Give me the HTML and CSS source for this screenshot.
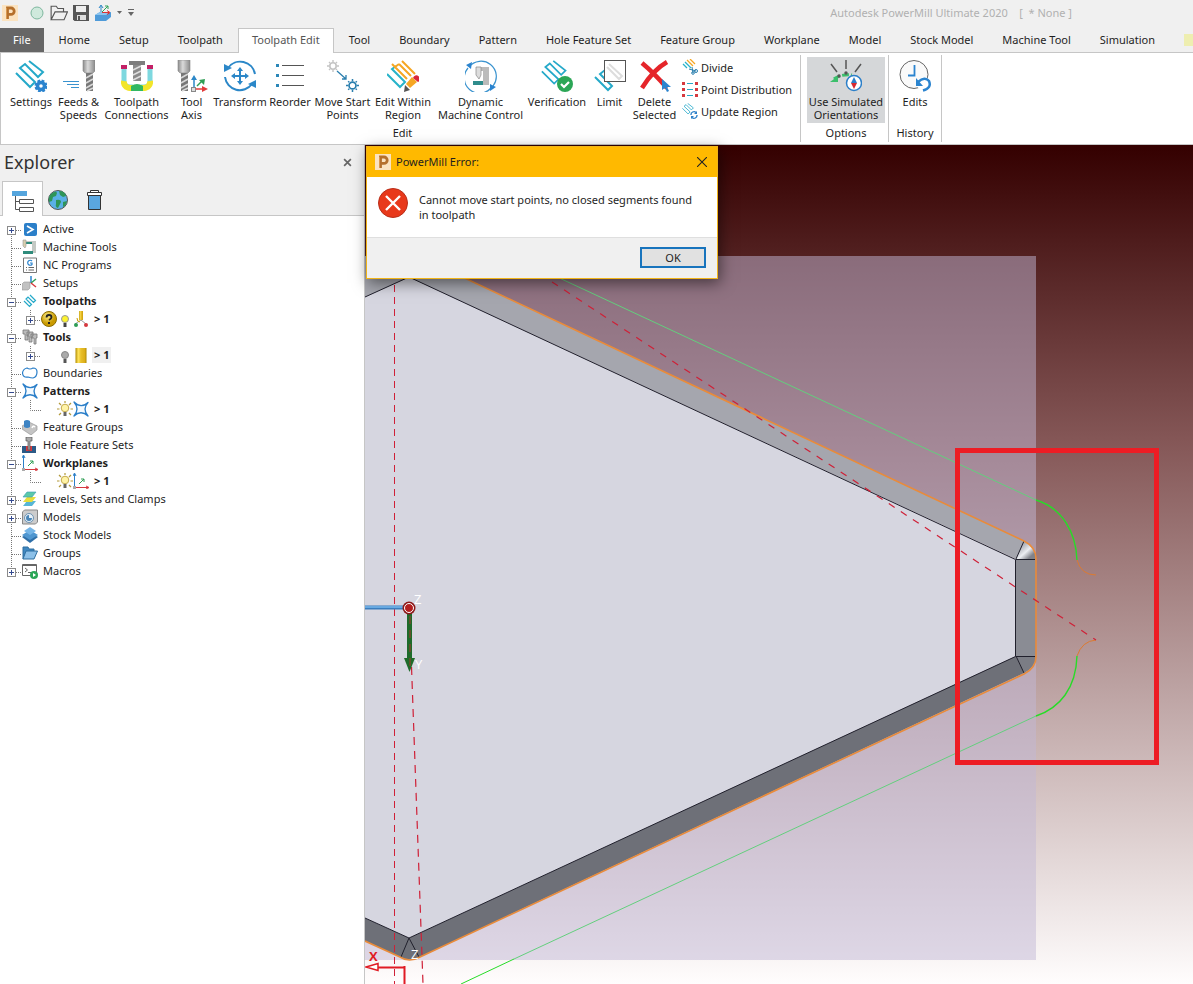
FILE: index.html
```html
<!DOCTYPE html>
<html lang="en">
<head>
<meta charset="utf-8">
<title>Autodesk PowerMill Ultimate 2020</title>
<link rel="stylesheet" href="styles.css">
</head>
<body>
<svg class="defs" aria-hidden="true">
  <defs>
    <linearGradient id="steel"><stop offset="0" stop-color="#8d8d8d"/><stop offset=".4" stop-color="#dadada"/><stop offset="1" stop-color="#8a8a8a"/></linearGradient>
    <linearGradient id="gold"><stop offset="0" stop-color="#b08a00"/><stop offset=".25" stop-color="#ffe45a"/><stop offset=".5" stop-color="#e8bf2a"/><stop offset=".85" stop-color="#dcae18"/><stop offset="1" stop-color="#a88400"/></linearGradient>
    <radialGradient id="orb" cx=".4" cy=".3"><stop offset="0" stop-color="#fff08a"/><stop offset="1" stop-color="#c99a00"/></radialGradient>
    <symbol id="p" viewBox="0 0 16 16"><rect width="16" height="16" fill="#fbe3c0"/><path d="M5.500 14V3H9a3.200 3.200 0 0 1 0 6.400H6" fill="none" stroke="#b5702c" stroke-width="2.800"/><path d="M4.500 14V3" stroke="#d9984f"/></symbol>
    <symbol id="cutter" viewBox="0 0 14 32"><path d="M1 0h12v11l-2 2H3l-2-2z" fill="url(#steel)" stroke="#888" stroke-width=".6"/><path d="M4 13h7v18H4z" fill="#777"/><path d="M4 18l7-4M4 23l7-4M4 28l7-4M5 31l6-3" stroke="#d8d8d8" stroke-width="1.600"/></symbol>
    <symbol id="hatch" viewBox="0 0 32 32"><path d="M1 13L15 27L20 22L5 8L10 4L23 17L28 12L14 1" fill="none" stroke="#25a9c9" stroke-width="2"/></symbol>
    <symbol id="star" viewBox="0 0 16 16"><path d="M1 1Q8 8 15 1.500Q9 8 15 15Q8 8.500 1 15Q7 8 1 1Z" fill="#f4faff" stroke="#2b7fc9" stroke-width="1.300" stroke-linejoin="round"/></symbol>
    <symbol id="planes" viewBox="0 0 16 16"><path d="M1.500 14V1M0 3l1.500-3L3 3" stroke="#2b7fc9" fill="none"/><path d="M2 14.500h13M13 13l3 1.500-3 1.500" stroke="#d6393f" fill="none"/><path d="M6 11l5-5M8 6h3v3" stroke="#2f9e55" fill="none"/><rect y="13" width="3" height="3" fill="#aaa"/></symbol>
    <symbol id="lit" viewBox="0 0 16 16"><path d="M8 0v2M2 2l2 2M14 2l-2 2M0 8h2.500M13.500 8H16M2 14l2-2M14 14l-2-2" stroke="#b39a3a" stroke-width="1.200"/><circle cx="8" cy="7" r="3.800" fill="#fff3a6" stroke="#c4a94c"/><path d="M6.500 11h3v4h-3z" fill="#666"/></symbol>
    <symbol id="sun-gear" viewBox="0 0 12 12"><circle cx="6" cy="6" r="3.200" fill="none" stroke="currentColor" stroke-width="1.600"/><path d="M6 0v2M6 10v2M0 6h2M10 6h2M2 2l1 1M10 2L9 3M2 10l1-1M10 10L9 9" stroke="currentColor" stroke-width="1.400"/></symbol>
    <symbol id="t-plus" viewBox="0 0 22 18"><path d="M11.500 0v18M16 10.500h6" class="dots"/><rect x="7.500" y="6.500" width="8" height="8" fill="#fff" stroke="#8b8b8b"/><path d="M9 10.500h5M11.500 8v5" stroke="#33498f"/></symbol>
    <symbol id="t-minus" viewBox="0 0 22 18"><path d="M11.500 0v18M16 10.500h6" class="dots"/><rect x="7.500" y="6.500" width="8" height="8" fill="#fff" stroke="#8b8b8b"/><path d="M9 10.500h5" stroke="#33498f"/></symbol>
    <symbol id="t-first" viewBox="0 0 22 18"><path d="M11.500 14v4M16 10.500h6" class="dots"/><rect x="7.500" y="6.500" width="8" height="8" fill="#fff" stroke="#8b8b8b"/><path d="M9 10.500h5M11.500 8v5" stroke="#33498f"/></symbol>
    <symbol id="t-last" viewBox="0 0 22 18"><path d="M11.500 0v7M16 10.500h6" class="dots"/><rect x="7.500" y="6.500" width="8" height="8" fill="#fff" stroke="#8b8b8b"/><path d="M9 10.500h5M11.500 8v5" stroke="#33498f"/></symbol>
    <symbol id="t-leaf" viewBox="0 0 22 18"><path d="M11.500 0v18M12 10.500h10" class="dots"/></symbol>
    <symbol id="t-line" viewBox="0 0 22 18"><path d="M11.500 0v18" class="dots"/></symbol>
    <symbol id="c-plus" viewBox="0 0 19 18"><path d="M8.500 0v6M13 10.500h6" class="dots"/><rect x="4.500" y="6.500" width="8" height="8" fill="#fff" stroke="#8b8b8b"/><path d="M6 10.500h5M8.500 8v5" stroke="#33498f"/></symbol>
    <symbol id="c-leaf" viewBox="0 0 19 18"><path d="M8.500 0v10.500H19" class="dots"/></symbol>
  </defs>
</svg>

<div class="app">
  <header class="titlebar">
    <svg class="i16"><use href="#p"/></svg>
    <div class="quick">
      <button aria-label="Status"><svg class="i16" viewBox="0 0 16 16"><circle cx="8" cy="8" r="6" fill="#cfe9dc" stroke="#7eb79e"/></svg></button>
      <button aria-label="Open"><svg class="i18" viewBox="0 0 16 16"><path d="M1 14V2h4.500l1.500 2h5v3M1 14h11.500L15.500 7H4.500z" fill="none" stroke="#555"/></svg></button>
      <button aria-label="Save"><svg class="i16" viewBox="0 0 16 16"><path d="M0 0h16v16H1.500L0 14.500z" fill="#555"/><path d="M3 1h10v6H3z" fill="#eee"/><path d="M4 10h9v5H4z" fill="#ddd"/><path d="M5 11h2v4H5z" fill="#555"/></svg></button>
      <button aria-label="Export"><svg class="i18" viewBox="0 0 18 18"><path d="M1 11l5-3h11v5l-5 4H1z" fill="#4f9bd9"/><path d="M1 11l5-3h11l-5 3z" fill="#8cc4ee"/><path d="M7 8V2M5 4l2-3 2 3" stroke="#2b87c8" fill="none"/><path d="M8 8l6-6M11 2h3v3" stroke="#30a35c" fill="none"/><path d="M8 8.500h7M13 6.500l3 2-3 2" stroke="#d33" fill="none"/></svg></button>
      <button aria-label="Export options"><svg class="i6" viewBox="0 0 6 6"><path d="M0 1h5L2.500 4z" fill="#666"/></svg></button>
      <button aria-label="Customize"><svg class="i6" viewBox="0 0 6 8"><path d="M0 0h6v1H0zM0 3h6L3 7z" fill="#666"/></svg></button>
    </div>
    <h1>Autodesk PowerMill Ultimate 2020 &nbsp;&nbsp; [ &nbsp;* None ]</h1>
  </header>

  <nav class="tabs">
    <button class="file">File</button><button>Home</button><button>Setup</button><button>Toolpath</button><button class="current">Toolpath Edit</button><button>Tool</button><button>Boundary</button><button>Pattern</button><button>Hole Feature Set</button><button>Feature Group</button><button>Workplane</button><button>Model</button><button>Stock Model</button><button>Machine Tool</button><button>Simulation</button><button aria-label="More"><svg class="i16" viewBox="0 0 16 16"><rect y="2" width="16" height="12" fill="#eeeeb0"/></svg></button>
  </nav>

  <section class="ribbon">
    <div class="group">
      <div class="tools edit">
        <button><svg viewBox="0 0 32 32"><use href="#hatch"/><circle cx="26" cy="26" r="3.500" fill="none" stroke="#2b84cf" stroke-width="3.500"/><circle cx="26" cy="26" r="5.300" fill="none" stroke="#2b84cf" stroke-width="2.400" stroke-dasharray="2.700 1.460"/></svg>Settings</button>
        <button><svg viewBox="0 0 32 32"><use href="#cutter" x="19" width="14" height="32"/><path d="M0 21.500h16M4 24.500h12M8 27.500h8" stroke="#3a93cf"/></svg>Feeds &amp;<br>Speeds</button>
        <button><svg viewBox="0 0 32 32"><path d="M3 8v13a6 6 0 0 0 6 6h3" fill="none" stroke="#7ed8df" stroke-width="5"/><path d="M29 8v13a6 6 0 0 1-6 6h-3" fill="none" stroke="#7ed8df" stroke-width="5"/><path d="M3 21a6 6 0 0 0 6 7h3M29 21a6 6 0 0 1-6 7h-3" fill="none" stroke="#f2e52b" stroke-width="6"/><path d="M10 26q6-4 12 0v5H10z" fill="#31b862"/><path d="M0 5h6v4H0zM26 5h6v4h-6z" fill="#c32066"/><path d="M12 4h8v17h-8z" fill="#8a8a8a"/><path d="M12 10l8-4M12 15l8-4M12 20l8-4" stroke="#ddd" stroke-width="1.600"/><path d="M8 1h16v4H8z" fill="#7d7d7d"/></svg>Toolpath<br>Connections</button>
        <button><svg viewBox="0 0 32 32"><use href="#cutter" x="1" width="14" height="32"/><path d="M18 27V18" stroke="#2b87c8" stroke-width="1.500"/><path d="M15 20l3-5 3 5z" fill="#2b87c8"/><path d="M21 26l5-5" stroke="#2f9e55" stroke-width="1.500"/><path d="M23 20l6-1-1 6z" fill="#2f9e55"/><path d="M19 29h8" stroke="#e23b3b" stroke-width="1.500"/><path d="M26 26l6 3-6 3z" fill="#e23b3b"/><rect x="15.500" y="27.500" width="4" height="4" fill="#ddd" stroke="#888"/></svg>Tool<br>Axis</button>
        <button><svg viewBox="0 0 32 32"><g fill="none" stroke="#2b87c8" stroke-width="2"><path d="M4 8A15 15 0 0 1 31 14M1 17A15 15 0 0 0 28 24"/><path d="M16 10v12M10 16h12"/></g><path d="M0 12V4l8 4zM32 20v8l-8-4zM16 7l3 4h-6zM16 25l3-4h-6zM7 16l4-3v6zM25 16l-4-3v6z" fill="#2b87c8"/></svg>Transform</button>
        <button><svg viewBox="0 0 32 32"><path d="M2 4h3v3H2zM2 14h3v3H2zM2 24h3v3H2z" fill="#2b87b8"/><path d="M8 5.500h22M8 15.500h22M8 25.500h22" stroke="#555"/></svg>Reorder</button>
        <button><svg viewBox="0 0 32 32"><use href="#sun-gear" width="12" height="12" color="#c4c4c4"/><use href="#sun-gear" x="19" y="19" width="13" height="13" color="#2b7fae"/><path d="M10 11l9 8M19 15v4h-4" stroke="#2b7fae" stroke-width="1.300" fill="none"/></svg>Move Start<br>Points</button>
        <button><svg viewBox="0 0 32 32"><path d="M0 14L13 27L18 22L5 9L9 6" fill="none" stroke="#28b3c9" stroke-width="2"/><path d="M9 6L21 18M7 3L24 20M8 2L11 1L27 16M3 6L15 18" fill="none" stroke="#fff" stroke-width="0"/><path d="M8 7L20 19M5 4L8 7M12 4L24 16M15 1L28 14M8 7L12 4" fill="none" stroke="#f6a623" stroke-width="2"/><path d="M19 24l6-7 5 5-7 6z" fill="#f6a623"/><path d="M26 18a3.500 3.500 0 1 1 5 4z" fill="#d9263a"/><path d="M18 25l5 5-6 2z" fill="#555"/></svg>Edit Within<br>Region</button>
        <button><svg viewBox="0 0 32 32"><path d="M4 7A15 15 0 0 1 28 26M26 28A15 15 0 0 1 3 8" fill="none" stroke="#3a93cf" stroke-width="1.200"/><path d="M1 5l6-3-1 7zM31 27l-6 4 0-7z" fill="#2b84cf"/><path d="M18 7h6v18h-6zM12 7h8v4h-8z" fill="#bbb"/><path d="M11 7h5v8l-2 4-3-4z" fill="#ddd" stroke="#888" stroke-width=".7"/><path d="M8 21h10v4H8z" fill="#2f8c8c"/></svg>Dynamic<br>Machine Control</button>
        <button><svg viewBox="0 0 32 32"><use href="#hatch" width="28" height="28"/><circle cx="24" cy="24" r="8" fill="#2ba656"/><path d="M20 24l3 3 5-5" stroke="#fff" stroke-width="2.200" fill="none"/></svg>Verification</button>
        <button><svg viewBox="0 0 32 32"><path d="M1 17l13 13 4-4L6 14l5-4 9 9" fill="none" stroke="#25a9c9" stroke-width="2"/><rect x="10.500" y=".5" width="21" height="21" fill="#fff" stroke="#555"/><path d="M13 7l12 12 3-3L15 4" fill="none" stroke="#ddd" stroke-width="2"/></svg>Limit</button>
        <button><svg viewBox="0 0 32 32"><path d="M3 3q12 10 25 25M28 2Q14 10 3 28" stroke="#e5252a" stroke-width="4.500" fill="none"/><path d="M23 19v11l3-2 2 4 2-1-2-4h4z" fill="#2b84cf"/></svg>Delete<br>Selected</button>
        <div class="stack">
          <button><svg viewBox="0 0 16 16"><path d="M1 5l4 4M3 3l6 6" stroke="#28b3c9" stroke-width="1.300"/><path d="M5 1l6 6M8 0l5 5" stroke="#f6a623" stroke-width="1.300"/><path d="M7 10l7 2M10 8l1 6" stroke="#2b7fae"/><circle cx="14" cy="12" r="1.500" fill="none" stroke="#2b7fae"/><circle cx="11" cy="14" r="1.300" fill="none" stroke="#2b7fae"/></svg>Divide</button>
          <button><svg viewBox="0 0 16 16"><path d="M5 2.500h6M5 8.500h6M5 14.500h6" stroke="#25a9c9" stroke-width="1.200"/><path d="M0 1h3v3H0zM0 7h3v3H0zM0 13h3v3H0zM13 1h3v3h-3zM13 7h3v3h-3zM13 13h3v3h-3z" fill="#d6393f"/></svg>Point Distribution</button>
          <button><svg viewBox="0 0 16 16"><use href="#hatch" width="13" height="13"/><path d="M9 12a3 3 0 0 1 5-2.500M15 12a3 3 0 0 1-5 2.500" fill="none" stroke="#2b7fc9" stroke-width="1.300"/><path d="M15 8v3h-3zM9 16v-3h3z" fill="#2b7fc9"/></svg>Update Region</button>
        </div>
      </div>
      <h2>Edit</h2>
    </div>
    <div class="group options">
      <div class="tools">
        <button class="pressed" aria-pressed="true"><svg viewBox="0 0 32 32"><path d="M1 4l6 8M16 0v9M31 4l-6 8" stroke="#555" stroke-width="1.500"/><path d="M4 19q6-5 18-4" fill="none" stroke="#3bbf6c" stroke-width="3" stroke-dasharray="7 2"/><path d="M0 22l8-6v6z" fill="#3bbf6c"/><circle cx="9" cy="16" r="1.700" fill="#555"/><circle cx="16" cy="13" r="1.700" fill="#555"/><circle cx="24" cy="23" r="7.500" fill="#fff" stroke="#2b7fc9" stroke-width="1.500"/><path d="M24 17l3 6h-6z" fill="#2b7fc9"/><path d="M24 29l3-6h-6z" fill="#d6292f"/></svg>Use Simulated<br>Orientations</button>
      </div>
      <h2>Options</h2>
    </div>
    <div class="group history">
      <div class="tools">
        <button><svg viewBox="0 0 32 32"><circle cx="15" cy="14.500" r="14" fill="#fafafa" stroke="#666"/><path d="M15.500 5v10.500H9" fill="none" stroke="#2b84cf" stroke-width="1.800"/><circle cx="25" cy="24" r="7" fill="#fff"/><path d="M19 22q7-6 11-1q3 7-6 9.500" fill="none" stroke="#2b84cf" stroke-width="2.500"/><path d="M17 18v8h7z" fill="#2b84cf"/></svg>Edits</button>
      </div>
      <h2>History</h2>
    </div>
  </section>

  <main class="work">
    <aside class="explorer">
      <div class="head"><h2>Explorer</h2><button aria-label="Close explorer"><svg viewBox="0 0 8 8"><path d="M1 1l6 6M7 1L1 7" stroke="#666" stroke-width="1.500"/></svg></button></div>
      <div class="views">
        <button class="current" aria-label="Tree"><svg viewBox="0 0 24 24"><path d="M1 2h15v5H1z" fill="#55a5dd"/><path d="M4.500 7v13.500H8M4.500 12.500H8" fill="none" stroke="#555"/><path d="M8.500 10.500h14v4h-14zM8.500 18.500h14v4h-14z" fill="#fff" stroke="#555"/></svg></button>
        <button aria-label="Web"><svg viewBox="0 0 24 24"><circle cx="12" cy="12" r="9.500" fill="#5ab0e6" stroke="#555"/><path d="M5 6q5-4 6-1l-1 3-3 1-1 4-3 1q-1-5 2-8zM13 3q6 0 7 5l-3 1-3-2zM10 12q5-1 5 2l-3 6q-3-1-2-4zM17 14l4-1q-1 5-4 6z" fill="#2f9558"/></svg></button>
        <button aria-label="Recycle bin"><svg viewBox="0 0 24 24"><path d="M6.500 7.500h12v14h-12z" fill="#5aa7e0" stroke="#333"/><path d="M5.500 4.500h14v3h-14zM8.500 4.500v-2h8v2" fill="#fff" stroke="#333"/></svg></button>
      </div>
      <ul class="tree">
        <li><button class="twig" aria-label="Expand Active"><svg><use href="#t-first"/></svg></button><svg class="i16" viewBox="0 0 16 16"><rect x="2" y="2" width="13" height="13" rx="2" fill="#2b7fc9"/><path d="M5 5l6 3.500L5 12" fill="none" stroke="#fff" stroke-width="1.600"/></svg><span>Active</span></li>
        <li><svg class="line"><use href="#t-leaf"/></svg><svg class="i16" viewBox="0 0 16 16"><path d="M4 2h10v12h-4V5H4z" fill="#c4c9c4"/><path d="M3 3h7v2H3zM1 12h10v3H1z" fill="#2f8c7c"/><path d="M1 1h3v6l-1 2-2-2z" fill="#d8cfae" stroke="#999" stroke-width=".6"/></svg><span>Machine Tools</span></li>
        <li><svg class="line"><use href="#t-leaf"/></svg><svg class="i16" viewBox="0 0 16 16"><path d="M1.500 1h13v14.500h-13z" fill="#fff" stroke="#777"/><path d="M10 4a2.500 2.500 0 1 0 0 3.500V6H8" fill="none" stroke="#2b84cf" stroke-width="1.200"/><path d="M4 10.500h1M6.500 10.500H12M4 13h1M6.500 13H12" stroke="#666"/></svg><span>NC Programs</span></li>
        <li><svg class="line"><use href="#t-leaf"/></svg><svg class="i16" viewBox="0 0 16 16"><path d="M0 9l2-2h6v6l-2 2H0z" fill="#c2c2c2" stroke="#999" stroke-width=".6"/><path d="M9 8V1" stroke="#2b84cf" stroke-width="1.500"/><path d="M9 8l5-4" stroke="#2f9e55" stroke-width="1.500"/><path d="M9 8l5 4" stroke="#d6393f" stroke-width="1.500"/></svg><span>Setups</span></li>
        <li><button class="twig" aria-label="Collapse Toolpaths"><svg><use href="#t-minus"/></svg></button><svg class="i16" viewBox="0 0 16 16"><path d="M2 8l5.500 5.500 2-2L4 6l2-2 5.500 5.500 2-2L8 2" fill="none" stroke="#25a9c9" stroke-width="1.200"/></svg><b>Toolpaths</b></li>
        <li><svg class="line"><use href="#t-line"/></svg><button class="twig sub" aria-label="Expand toolpath 1"><svg><use href="#c-plus"/></svg></button><svg class="i16" viewBox="0 0 16 16"><circle cx="8" cy="8" r="7.500" fill="url(#orb)" stroke="#8c6d00"/><path d="M5.500 6.500Q5.500 4 8 4t2.500 2.200Q10.500 7.500 8 9" fill="none" stroke="#222" stroke-width="1.800"/><path d="M7 11h2v2H7z" fill="#222"/></svg><svg class="i16" viewBox="0 0 16 16"><circle cx="8" cy="8" r="3.500" fill="#fdf32e" stroke="#999"/><path d="M6.500 12h3v4h-3z" fill="#444"/></svg><svg class="i16" viewBox="0 0 16 16"><path d="M6 0h4v9H6z" fill="url(#gold)"/><path d="M8 9l-6 4M8 9l5 4" stroke="#999"/><path d="M4 7q0 4 3 4" fill="none" stroke="#c99a00"/><circle cx="3" cy="14" r="2" fill="#2f9e55"/><circle cx="13" cy="14" r="2" fill="#d6393f"/></svg><b class="leaf">&gt; 1</b></li>
        <li><button class="twig" aria-label="Collapse Tools"><svg><use href="#t-minus"/></svg></button><svg class="i16" viewBox="0 0 16 16"><g fill="#bbb" stroke="#777" stroke-width=".8"><path d="M1 1h6v4H6v6H3V5H1zM5 3h6v4h-1v6H7V7H5zM9 5h6v4h-1v6h-2V9H9z"/></g></svg><b>Tools</b></li>
        <li><svg class="line"><use href="#t-line"/></svg><button class="twig sub" aria-label="Expand tool 1"><svg><use href="#c-plus"/></svg></button><span class="i16"></span><svg class="i16" viewBox="0 0 16 16"><circle cx="8" cy="8" r="3.500" fill="#aaa" stroke="#888"/><path d="M6.500 12h3v4h-3z" fill="#555"/></svg><svg class="i16" viewBox="0 0 16 16"><path d="M2.500 1h11v15h-11z" fill="url(#gold)"/></svg><b class="leaf shaded">&gt; 1</b></li>
        <li><svg class="line"><use href="#t-leaf"/></svg><svg class="i16" viewBox="0 0 16 16"><path d="M5 3q3 2 6 0 4 0 4 4 0 5-4 6-2 0-5-1-5 1-5.500-4Q1 4 5 3z" fill="#fff" stroke="#2b7fc9" stroke-width="1.200"/></svg><span>Boundaries</span></li>
        <li><button class="twig" aria-label="Collapse Patterns"><svg><use href="#t-minus"/></svg></button><svg class="i16"><use href="#star"/></svg><b>Patterns</b></li>
        <li><svg class="line"><use href="#t-line"/></svg><svg class="line sub"><use href="#c-leaf"/></svg><span class="i16"></span><svg class="i16"><use href="#lit"/></svg><svg class="i16"><use href="#star"/></svg><b class="leaf">&gt; 1</b></li>
        <li><svg class="line"><use href="#t-leaf"/></svg><svg class="i16" viewBox="0 0 16 16"><path d="M0 7l7-4 8 4v4l-6 5-9-6z" fill="#c4c4c4" stroke="#999" stroke-width=".7"/><path d="M2 2q3-2 6 0v6q-3 2-6 0z" fill="#3d84c4"/><path d="M10 9q1-3 3-1" fill="none" stroke="#fff" stroke-width="1.500"/></svg><span>Feature Groups</span></li>
        <li><svg class="line"><use href="#t-leaf"/></svg><svg class="i16" viewBox="0 0 16 16"><path d="M0 9h4v3h6V9h4v7H0z" fill="#2c5a86"/><path d="M4 9h6v5H4z" fill="#d6393f"/><path d="M4 0h6v4H8v9H6V4H4z" fill="#aaa" stroke="#555" stroke-width=".7"/></svg><span>Hole Feature Sets</span></li>
        <li><button class="twig" aria-label="Collapse Workplanes"><svg><use href="#t-minus"/></svg></button><svg class="i16"><use href="#planes"/></svg><b>Workplanes</b></li>
        <li><svg class="line"><use href="#t-line"/></svg><svg class="line sub"><use href="#c-leaf"/></svg><span class="i16"></span><svg class="i16"><use href="#lit"/></svg><svg class="i16"><use href="#planes"/></svg><b class="leaf">&gt; 1</b></li>
        <li><button class="twig" aria-label="Expand Levels"><svg><use href="#t-plus"/></svg></button><svg class="i16" viewBox="0 0 16 16"><path d="M1 15l4-5h9l-4 5z" fill="#57b6d6"/><path d="M1 11l4-5h9l-4 5z" fill="#e6dd3c"/><path d="M1 6l4-5h9l-4 5z" fill="#5cc9a8" stroke="#3a9bb8" stroke-width=".6"/></svg><span>Levels, Sets and Clamps</span></li>
        <li><button class="twig" aria-label="Expand Models"><svg><use href="#t-plus"/></svg></button><svg class="i16" viewBox="0 0 16 16"><path d="M.5 3l2-2h13v12l-2 2H.5z" fill="#ccc" stroke="#888"/><circle cx="7" cy="9" r="4.500" fill="#e6f0f8" stroke="#6e92b0"/><path d="M7 6a3 3 0 1 0 3 3H7z" fill="#4a86b8"/></svg><span>Models</span></li>
        <li><svg class="line"><use href="#t-leaf"/></svg><svg class="i16" viewBox="0 0 16 16"><path d="M8 5l8 5-8 6-8-6z" fill="#2f6fa8"/><path d="M8 3l8 5-8 5-8-5z" fill="#4f96d0"/><path d="M8 0l6 4-6 4-6-4z" fill="#74b4e6"/></svg><span>Stock Models</span></li>
        <li><svg class="line"><use href="#t-leaf"/></svg><svg class="i16" viewBox="0 0 16 16"><path d="M1 14V2h5l1 2h5v2" fill="#3f87c0" stroke="#2f6fa0"/><path d="M1 14L4 6h11.500L12 14z" fill="#8cc0e8" stroke="#2f6fa0"/></svg><span>Groups</span></li>
        <li><button class="twig" aria-label="Expand Macros"><svg><use href="#t-last"/></svg></button><svg class="i16" viewBox="0 0 16 16"><path d="M.5 1.500h14v11H.5z" fill="#fff" stroke="#666"/><path d="M.5 2.500h14" stroke="#666"/><path d="M3 5l2.500 2L3 9M6 9.500h3" fill="none" stroke="#666"/><circle cx="12" cy="12" r="4" fill="#2ba656"/><path d="M11 10l3 2-3 2z" fill="#fff"/></svg><span>Macros</span></li>
      </ul>
    </aside>

    <section class="viewport">
      <svg class="scene" viewBox="365 145 828 839" preserveAspectRatio="xMinYMin slice" role="img" aria-label="Model with toolpath">
        <defs>
          <linearGradient id="sky" x1="0" y1="0" x2="0" y2="1"><stop offset="0" stop-color="#340000"/><stop offset=".35" stop-color="#845656"/><stop offset="1" stop-color="#fffdfd"/></linearGradient>
          <linearGradient id="fillet" x1="0" y1="0" x2="1" y2="1"><stop offset=".2" stop-color="#9c9ea6"/><stop offset=".55" stop-color="#eceef2"/><stop offset=".8" stop-color="#80828a"/></linearGradient>
        </defs>
        <rect x="365" y="145" width="828" height="839" fill="url(#sky)"/>
        <rect x="365" y="256" width="671" height="704" fill="#c1b8d6" fill-opacity=".5"/>
        <path d="M365 279V256H418L1024 541L1016 559L409 277L365 297Z" fill="#a5a6ae"/>
        <path d="M1016 559H1036V656H1016Z" fill="#8a8c94"/>
        <path d="M1016 559L1024 541Q1036 546 1036 559Z" fill="url(#fillet)"/>
        <path d="M1016 656H1036Q1035 668 1024 673Z" fill="#7b7d85"/>
        <path d="M1016 656L1024 673L420 957Q409 962 400 957L365 941V918L409 938Z" fill="#6e7078"/>
        <path d="M365 297L409 277L1016 559V656L409 938L365 918Z" fill="#d6d6e0"/>
        <path d="M365 297L409 277L1015.500 559.500V656.500L409 938L365 918" fill="none" stroke="#20202c"/>
        <path d="M1016 559L1024 541M1016 559.500H1035M1016 656.500H1035M1016 656L1024 673M409 938L401 957M409 938L419 957" fill="none" stroke="#20202c"/>
        <path d="M420 257L1024 541Q1036 547 1036 559V657Q1036 668 1024 674L420 957Q409 963 400 957L365 941" fill="none" stroke="#e98b3a" stroke-width="1.600"/>
        <g fill="none">
          <path d="M540 269L1036 500" stroke="#63cf7d"/>
          <path d="M1036 500C1062 508 1076 532 1077 560" stroke="#27dc27" stroke-width="1.400"/>
          <path d="M1077 560Q1081 575 1096 575" stroke="#dc7a31"/>
          <path d="M1096 640Q1082 641 1077 656" stroke="#dc7a31"/>
          <path d="M1077 656C1076 688 1060 708 1036 716" stroke="#27dc27" stroke-width="1.400"/>
          <path d="M1036 716L514 959" stroke="#63cf7d"/>
          <path d="M514 959L461 984" stroke="#27dc27"/>
          <g stroke="#cf2037"><path d="M540 274L1096 640" stroke-dasharray="7 7.400" stroke-width="1.200"/><path d="M394.500 285V984" stroke-dasharray="7 5"/><path d="M410 625L423 984" stroke-dasharray="8 6" stroke-width="1.200"/></g>
        </g>
        <path d="M365 607.500H404" stroke="#3b7dbd" stroke-width="4"/><path d="M365 607H404" stroke="#79b9ee" stroke-width="1.500"/>
        <path d="M409.500 612V659" stroke="#1f6b2a" stroke-width="5"/><path d="M404 658h11l-5.500 14z" fill="#1f6b2a"/>
        <path d="M410 616V668" stroke="#a33a2c" stroke-dasharray="8 6"/>
        <circle cx="409" cy="608" r="6.500" fill="#8c1818"/><circle cx="409" cy="608" r="4.500" fill="#b31f1f" stroke="#fff"/>
        <path d="M405 967.500H377M404.500 966V984" stroke="#e01b24" stroke-width="2"/><path d="M366 967l12-3.500v7z" fill="#fff" stroke="#e01b24" stroke-width="1.500"/>
        <g class="axis"><text x="414" y="604">Z</text><text x="415" y="669">Y</text><text x="411" y="959">Z</text><text x="369" y="961" class="red">X</text></g>
        <rect x="957.500" y="450.500" width="199" height="312" fill="none" stroke="#ed1c24" stroke-width="5"/>
      </svg>
      <div class="dialog" role="alertdialog" aria-labelledby="dt" aria-describedby="dm">
        <div class="dtitle"><svg class="i16"><use href="#p"/></svg><h2 id="dt">PowerMill Error:</h2><button aria-label="Close"><svg viewBox="0 0 10 10"><path d="M0 0l10 10M10 0L0 10" stroke="#222" stroke-width="1.100"/></svg></button></div>
        <div class="dbody"><svg viewBox="0 0 30 30"><circle cx="15" cy="15" r="14.500" fill="#e8391b" stroke="#b92f1a"/><path d="M8 8l14 14M22 8L8 22" stroke="#fff" stroke-width="2.400"/></svg><p id="dm">Cannot move start points, no closed segments found in toolpath</p></div>
        <div class="dfoot"><button>OK</button></div>
      </div>
    </section>
  </main>
</div>
</body>
</html>
```
FILE: styles.css
```css
* { box-sizing: border-box; }
body, h1, h2, p, ul { margin: 0; padding: 0; }
body { font: 11px/14px "Noto Sans", "Open Sans", sans-serif; color: #1e1e1e; background: #f0f0f0; }
button { font: inherit; color: inherit; background: none; border: 0; padding: 0; margin: 0; }
h1, h2 { font-size: 11px; font-weight: 400; }
svg { display: block; flex: none; }
.defs { position: absolute; width: 0; height: 0; }
.dots { fill: none; stroke: #777; stroke-dasharray: 1 1; }
.i16 { width: 16px; height: 16px; flex: none; }
.i18 { width: 18px; height: 18px; }
.i6 { width: 6px; height: 8px; }

.app { display: flex; flex-direction: column; min-height: 100vh; overflow: hidden; }

.titlebar { display: flex; align-items: center; height: 26px; padding: 0 121px 0 2px; }
.quick { display: flex; align-items: center; gap: 5px; margin-left: 11px; }
.titlebar h1 { margin-left: auto; color: #b0b0b0; white-space: pre; }

.tabs { display: flex; gap: 1px; height: 27px; padding-top: 2px; border-bottom: 1px solid #c6c6c6; white-space: nowrap; margin-bottom: -1px; z-index: 1; }
.tabs button { padding: 0 14px; flex: none; }
.tabs .file { background: #666; color: #fff; padding: 0 13px; }
.tabs .current { background: #fff; color: #555; border: 1px solid #c6c6c6; border-bottom: 0; margin: 0 0 -1px; padding: 0 13px 2px; }

.ribbon { display: flex; height: 93px; background: #fff; border-left: 1px solid #c6c6c6; border-top: 1px solid #c6c6c6; border-bottom: 1px solid #c6c6c6; }
.group { display: flex; flex-direction: column; justify-content: space-between; margin: 2px 0; padding: 2px 3px 1px 6px; border-right: 1px solid #c6c6c6; }
.group:first-child { padding-left: 7px; }
.group h2 { text-align: center; line-height: 16px; }
.tools { display: flex; justify-content: center; }
.tools button { display: flex; flex-direction: column; align-items: center; gap: 3px; height: 66px; padding-top: 3px; line-height: 13px; white-space: nowrap; }
.tools button svg { width: 32px; height: 32px; }
.edit { display: grid; grid-template-columns: 46px 49px 67px 43px 54px 46px 59px 62px 93px 60px 45px 45px 120px; }
.stack { display: flex; flex-direction: column; padding-left: 5px; }
.tools .stack button { flex-direction: row; height: 22px; padding: 0 0 2px; }
.tools .stack svg { width: 16px; height: 16px; }
.pressed { width: 78px; background: #d5d7d9; }
.history { width: 53px; }
.group.history { padding: 2px 0 1px; }

.work { display: flex; flex: 1; }
.explorer { width: 365px; flex: none; background: #fff; border-right: 1px solid #c6c6c6; }
.head { display: flex; align-items: center; justify-content: space-between; height: 36px; padding: 0 12px 2px 4px; background: #f0f0f0; }
.head h2 { font-size: 18px; line-height: 24px; color: #333; }
.head button svg { width: 9px; height: 9px; }
.views { display: flex; gap: 6px; height: 35px; padding-left: 2px; background: #f0f0f0; border-bottom: 1px solid #c6c6c6; }
.views button { width: 30px; padding-top: 4px; display: flex; align-items: center; justify-content: center; }
.views .current { width: 41px; background: #fff; border: 1px solid #c6c6c6; border-bottom: 0; margin: 0 -6px -1px 0; }
.views svg { width: 24px; height: 24px; }
.tree { padding-top: 4px; list-style: none; }
.tree li { display: flex; align-items: center; height: 18px; }
.twig, .twig svg, .line { width: 22px; height: 18px; }
.twig.sub, .twig.sub svg, .line.sub { width: 19px; }
.tree span:not(.i16), .tree b { margin-left: 5px; }
.tree .leaf { padding: 0 2px; margin-left: 3px; line-height: 16px; }
.tree .shaded { background: #f0f0f0; }

.viewport { position: relative; flex: 1; min-width: 0; }
.scene { width: 100%; height: 100%; }
.axis { font: 13px "Open Sans", sans-serif; fill: #fff; }
.axis .red { fill: #e01b24; font-weight: 700; }

.dialog { position: absolute; top: 1px; left: 1px; width: 352px; background: #fff; border: 1px solid #f0b418; box-shadow: 2px 4px 14px rgba(0, 0, 0, .5); }
.dtitle { display: flex; align-items: center; height: 30px; padding: 0 10px 0 8px; background: #ffb900; }
.dtitle h2 { margin: 0 auto 0 5px; }
.dtitle button svg { width: 10px; height: 10px; }
.dbody { display: flex; gap: 11px; padding: 11px 18px 15px 11px; line-height: 15px; }
.dbody svg { width: 30px; height: 30px; }
.dbody p { padding-top: 4px; }
.dfoot { display: flex; justify-content: flex-end; padding: 9px 11px 10px; background: #f0f0f0; border-top: 1px solid #dfdfdf; }
.dfoot button { width: 66px; height: 21px; background: #e1e1e1; border: 2px solid #1874bd; }
```
